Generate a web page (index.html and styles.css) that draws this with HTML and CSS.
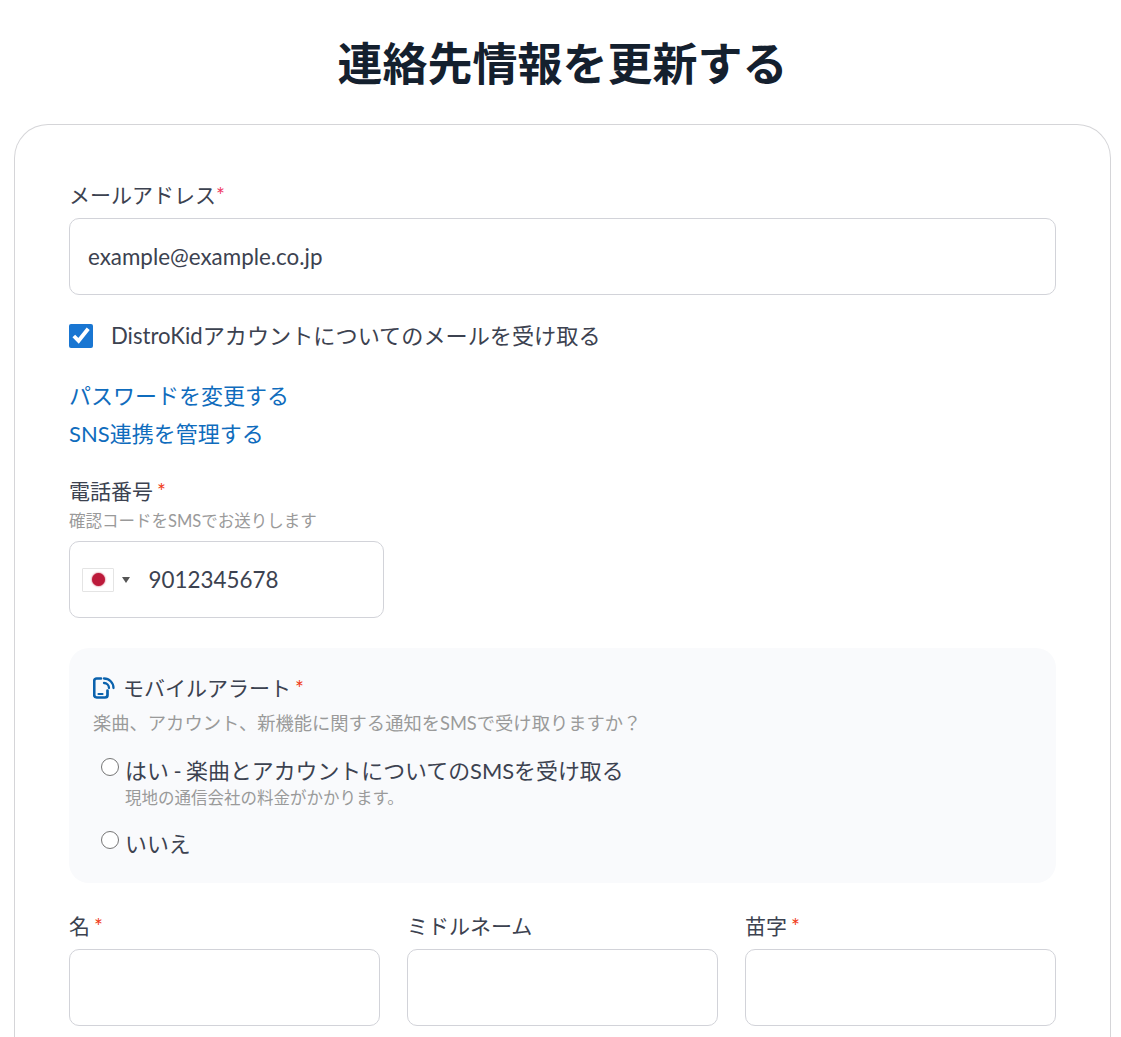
FILE: index.html
```html
<!DOCTYPE html>
<html lang="ja">
<head>
    <meta charset="UTF-8">
    <title>連絡先情報を更新する</title>
    <link rel="stylesheet" href="styles.css">
</head>
<body>
    <h1 class="page-title">連絡先情報を更新する</h1>

    <form class="card">
        <!-- Email -->
        <label class="field-label">メールアドレス<span class="req req-pink">*</span></label>
        <div class="input-box email-box">example@example.co.jp</div>

        <label class="check-row">
            <input type="checkbox" class="check" checked>
            <span>DistroKidアカウントについてのメールを受け取る</span>
        </label>

        <div class="links">
            <a href="#">パスワードを変更する</a>
            <a href="#">SNS連携を管理する</a>
        </div>

        <!-- Phone -->
        <label class="field-label phone-label">電話番号<span class="req req-spaced">*</span></label>
        <div class="hint">確認コードをSMSでお送りします</div>
        <div class="input-box phone-box">
            <span class="flag"><span class="flag-dot"></span></span>
            <span class="caret"></span>
            <span class="phone-number">9012345678</span>
        </div>

        <!-- Mobile alerts -->
        <div class="alert-panel">
            <div class="alert-title">
                <svg class="alert-icon" width="22" height="22" viewBox="0 0 22 22" fill="none" stroke="#0b62ad" stroke-width="2.7" stroke-linecap="round">
                    <path d="M8 1.5H3.7A2.5 2.5 0 0 0 1.2 4v14a2.5 2.5 0 0 0 2.5 2.5h8.3a2.5 2.5 0 0 0 2.5-2.5v-4.5"/>
                    <path d="M5.5 17h4" stroke-width="2.2"/>
                    <path d="M11 1.5a9.5 9.5 0 0 1 9.5 9.5" stroke-width="2.3"/>
                    <path d="M11 6a5 5 0 0 1 5 5" stroke-width="2.3"/>
                </svg>
                <span>モバイルアラート<span class="req req-spaced">*</span></span>
            </div>
            <div class="alert-desc">楽曲、アカウント、新機能に関する通知をSMSで受け取りますか？</div>

            <label class="radio-row first-radio">
                <input type="radio" name="sms" class="radio">
                <span class="radio-text">
                    はい - 楽曲とアカウントについてのSMSを受け取る
                    <small class="radio-note">現地の通信会社の料金がかかります。</small>
                </span>
            </label>
            <label class="radio-row">
                <input type="radio" name="sms" class="radio">
                <span class="radio-text">いいえ</span>
            </label>
        </div>

        <!-- Name -->
        <div class="name-grid">
            <div>
                <label class="field-label">名<span class="req req-spaced">*</span></label>
                <div class="input-box"></div>
            </div>
            <div>
                <label class="field-label">ミドルネーム</label>
                <div class="input-box"></div>
            </div>
            <div>
                <label class="field-label">苗字<span class="req req-spaced">*</span></label>
                <div class="input-box"></div>
            </div>
        </div>
    </form>
</body>
</html>
```

FILE: styles.css
```css
/* Basic Styles */
html, body {
    height: 1037px;
    overflow: hidden;
}

body {
    margin: 0;
    padding: 0 10px 0 14px;
    background-color: #fff;
    color: #3c4250;
    font-family: Lato, "Noto Sans CJK JP", sans-serif;
    font-size: 20px;
}

.page-title {
    margin: 0;
    padding-top: 34px;
    height: 124px;
    box-sizing: border-box;
    text-align: center;
    font-size: 45px;
    line-height: 60px;
    font-weight: 700;
    color: #14202e;
}

/* Card: its lower edge is cut off by the window */
.card {
    display: block;
    border: 1px solid #d5d5d8;
    border-bottom: 0;
    border-radius: 34px 34px 0 0;
    padding: 55px 54px 0;
    height: 913px;
    box-sizing: border-box;
}

.field-label {
    display: block;
    font-size: 21px;
    line-height: 30px;
    margin-bottom: 8px;
    color: #3c4250;
}

.req {
    color: #f03a17;
    font-size: 21px;
    line-height: 1;
}

.req-pink {
    color: #ef3a63;
}

.req-spaced {
    margin-left: 4px;
}

.input-box {
    height: 77px;
    box-sizing: border-box;
    border: 1px solid #d2d3d9;
    border-radius: 10px;
    background: #fff;
}

.email-box {
    display: flex;
    align-items: center;
    padding-left: 18px;
    font-size: 22.4px;
    color: #3c4250;
}

/* Checkbox */
.check-row {
    display: flex;
    align-items: center;
    gap: 18px;
    margin-top: 25px;
    font-size: 22.15px;
    line-height: 32px;
}

.check {
    width: 24px;
    height: 24px;
    margin: 0;
    accent-color: #1976d2;
}

/* Links */
.links {
    display: flex;
    flex-direction: column;
    margin-top: 25px;
}

.links a {
    color: #0f6cbd;
    text-decoration: none;
    font-size: 22px;
    line-height: 38px;
}

/* Phone */
.phone-label {
    margin: 23px 0 0;
}

.hint {
    margin-top: 3px;
    margin-bottom: 8px;
    font-size: 16.5px;
    line-height: 24px;
    color: #9a9a9a;
}

.phone-box {
    display: flex;
    align-items: center;
    width: 315px;
    padding-left: 12px;
}

.flag {
    display: flex;
    align-items: center;
    justify-content: center;
    width: 32px;
    height: 24px;
    box-sizing: border-box;
    border: 1px solid #e4e4e4;
    border-radius: 1px;
    background: #fff;
}

.flag-dot {
    width: 13px;
    height: 13px;
    border-radius: 50%;
    background: #bc1a3a;
    box-shadow: 0 0 2px #bc1a3a;
}

.caret {
    width: 0;
    height: 0;
    margin-left: 8px;
    border-left: 4.5px solid transparent;
    border-right: 4.5px solid transparent;
    border-top: 6px solid #555;
}

.phone-number {
    margin-left: 18.5px;
    font-size: 22.4px;
}

/* Alert panel */
.alert-panel {
    margin-top: 30px;
    height: 235px;
    box-sizing: border-box;
    padding: 25px 24px 0;
    background: #f9fafc;
    border-radius: 20px;
}

.alert-title {
    display: flex;
    align-items: center;
    gap: 8px;
    font-size: 21px;
    line-height: 30px;
}

.alert-desc {
    margin-top: 6px;
    font-size: 18.3px;
    line-height: 28px;
    color: #9a9a9a;
}

.radio-row {
    display: flex;
    align-items: flex-start;
    gap: 6px;
    margin: 19px 0 0 8px;
    font-size: 21.9px;
    line-height: 30px;
    word-spacing: -1px;
}

.first-radio {
    margin-top: 19px;
}

.radio {
    appearance: none;
    width: 18px;
    height: 18px;
    margin: 2px 0 0;
    flex: none;
    box-sizing: border-box;
    border: 1.8px solid #767676;
    border-radius: 50%;
    background: #fff;
}

.radio-note {
    display: block;
    font-size: 16.5px;
    line-height: 24px;
    color: #9a9a9a;
    word-spacing: normal;
}

/* Name fields */
.name-grid {
    display: grid;
    grid-template-columns: repeat(3, 1fr);
    gap: 27px;
    margin-top: 28px;
}
```
